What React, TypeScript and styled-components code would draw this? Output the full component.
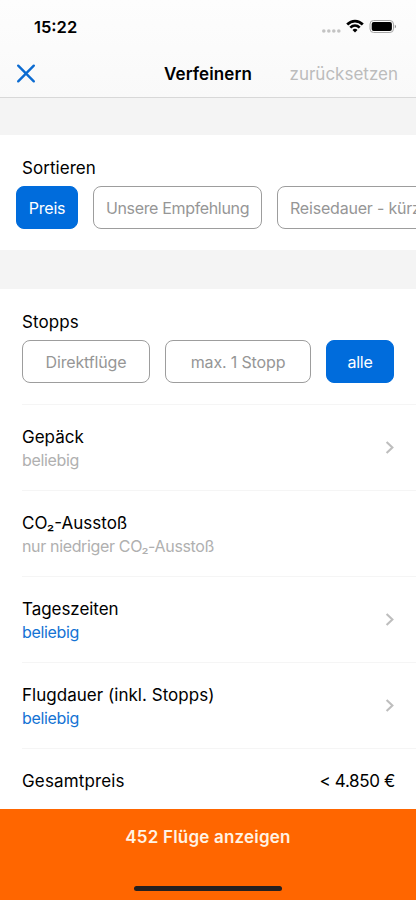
import React from "react";
import styled, { createGlobalStyle } from "styled-components";

const GlobalStyle = createGlobalStyle`
  * { box-sizing: border-box; }
  html, body { margin: 0; padding: 0; }
  body { background: #f4f4f4; font-family: Inter, "Liberation Sans", sans-serif; color: #000; overflow: hidden; }
  button { font: inherit; margin: 0; padding: 0; border: 0; background: none; }
`;

const Screen = styled.main`
  width: 416px;
  height: 900px;
  display: flex;
  flex-direction: column;
  background: #f4f4f4;
  overflow: hidden;
`;

const Header = styled.header`
  flex: none;
  height: 98px;
  border-bottom: 1px solid #d8d8d8;
  background: linear-gradient(#fdfdfd, #f9f9f9);
`;

const StatusBar = styled.div`
  height: 52px;
  padding: 1px 20px 0 34px;
  display: flex;
  align-items: center;
  justify-content: space-between;
`;

const Clock = styled.span`
  font-size: 16.5px;
  font-weight: 600;
  letter-spacing: 0;
`;

const NavBar = styled.div`
  height: 44px;
  padding: 0 18px 0 16px;
  display: grid;
  grid-template-columns: 108px 168px 106px;
  align-items: center;
`;

const CloseButton = styled.button`
  display: flex;
  width: 20px;
  height: 20px;
`;

const Title = styled.h1`
  margin: 0;
  text-align: center;
  white-space: nowrap;
  font-size: 17px;
  font-weight: 600;
  letter-spacing: 0.1px;
`;

const ResetButton = styled.button`
  justify-self: end;
  color: #bcbcbc;
  font-size: 17px;
  letter-spacing: 0;
  white-space: nowrap;
`;

const Section = styled.section<{ $height: number; $gap: number }>`
  flex: none;
  height: ${(p) => p.$height}px;
  margin-top: ${(p) => p.$gap}px;
  background: #fff;
  overflow: hidden;
`;

const SectionTitle = styled.h2<{ $spacing?: number }>`
  margin: 0;
  padding: 22px 22px 0;
  height: 51px;
  font-size: 17px;
  line-height: 23px;
  font-weight: 400;
  letter-spacing: ${(p) => p.$spacing ?? 0.05}px;
`;

const Chips = styled.div<{ $inset: number }>`
  display: flex;
  gap: 15px;
  padding-left: ${(p) => p.$inset}px;
`;

const Chip = styled.button<{ $width: number; $active?: boolean; $start?: boolean; $spacing?: number }>`
  flex: none;
  width: ${(p) => p.$width}px;
  height: 43px;
  border: 1px solid ${(p) => (p.$active ? "#006cdc" : "#9d9d9d")};
  border-radius: 8px;
  padding: 0 0 0 ${(p) => (p.$start ? 12 : 0)}px;
  text-align: ${(p) => (p.$start ? "left" : "center")};
  white-space: nowrap;
  background: ${(p) => (p.$active ? "#006cdc" : "#fff")};
  color: ${(p) => (p.$active ? "#fff" : "#969696")};
  font-size: 16px;
  letter-spacing: ${(p) => p.$spacing ?? -0.15}px;
`;

const Row = styled.div`
  height: 86px;
  margin-left: 22px;
  padding: 1px 21px 0 0;
  border-top: 1px solid #f5f5f5;
  display: flex;
  align-items: center;
  justify-content: space-between;
`;

const RowText = styled.div`
  padding-top: 1px;
`;

const PriceRow = styled(Row)`
  height: 61px;
  padding-top: 4px;
`;

const RowLabel = styled.div<{ $spacing?: number }>`
  font-size: 17px;
  line-height: 23px;
  letter-spacing: ${(p) => p.$spacing ?? -0.05}px;
`;

const RowValue = styled.div<{ $active?: boolean }>`
  font-size: 16px;
  line-height: 22px;
  color: ${(p) => (p.$active ? "#1473d4" : "#b0b0b0")};
  letter-spacing: -0.35px;
`;

const Price = styled.div`
  font-size: 17px;
  letter-spacing: -0.35px;
`;

const Footer = styled.footer`
  flex: none;
  height: 91px;
  background: #ff6600;
  display: flex;
  flex-direction: column;
  align-items: center;
  justify-content: space-between;
  padding: 17px 0 9px;
`;

const ShowButton = styled.button`
  color: #fff3e4;
  font-size: 17px;
  line-height: 23px;
  font-weight: 600;
  letter-spacing: 0.2px;
`;

const HomeIndicator = styled.div`
  width: 148px;
  height: 5px;
  border-radius: 3px;
  background: #242020;
`;

const StatusIcons = () => (
  <svg width="76" height="16" viewBox="0 0 76 16">
    <g fill="#c3c3c3">
      <circle cx="3.8" cy="12" r="1.8" />
      <circle cx="8.8" cy="12" r="1.8" />
      <circle cx="13.8" cy="12" r="1.8" />
      <circle cx="18.8" cy="12" r="1.8" />
    </g>
    <g fill="none" stroke="#000" strokeWidth="2.7">
      <path d="M27.2 5.5C31.7 0.9 38.3 0.9 42.8 5.5" />
      <path d="M30.3 8.6C33.1 5.9 36.9 5.9 39.7 8.6" />
    </g>
    <path d="M32.5 10.9C34 9.4 36 9.4 37.5 10.9L35 13.5Z" fill="#000" />
    <rect x="50" y="1.5" width="23.5" height="12" rx="3.6" fill="none" stroke="#a6a6a6" />
    <rect x="51.7" y="3.1" width="20.2" height="8.8" rx="2" fill="#000" />
    <path d="M74.8 5.8C76.4 6.4 76.4 8.6 74.8 9.2Z" fill="#929292" />
  </svg>
);

const CloseIcon = () => (
  <svg width="20" height="20" viewBox="0 0 20 20">
    <path d="M2.2 1.7L17.8 17.3M17.8 1.7L2.2 17.3" stroke="#0b6bd1" strokeWidth="2.4" strokeLinecap="round" />
  </svg>
);

const Chevron = () => (
  <svg width="10" height="14" viewBox="0 0 10 14">
    <path d="M1.6 0.9L7.4 6.5L1.6 12.1" fill="none" stroke="#bebebe" strokeWidth="2.1" />
  </svg>
);

const filters = [
  { label: "Gepäck", value: "beliebig", active: false, chevron: true, spacing: 0 },
  { label: "CO₂-Ausstoß", value: "nur niedriger CO₂-Ausstoß", active: false, chevron: false, spacing: 0 },
  { label: "Tageszeiten", value: "beliebig", active: true, chevron: true, spacing: -0.05 },
  { label: "Flugdauer (inkl. Stopps)", value: "beliebig", active: true, chevron: true, spacing: 0.03 },
];

const StopChips = styled.div`
  height: 64px;
`;

export default function App() {
  return (
    <>
      <GlobalStyle />
      <Screen>
        <Header>
          <StatusBar>
            <Clock>15:22</Clock>
            <StatusIcons />
          </StatusBar>
          <NavBar>
            <CloseButton aria-label="Schließen"><CloseIcon /></CloseButton>
            <Title>Verfeinern</Title>
            <ResetButton>zurücksetzen</ResetButton>
          </NavBar>
        </Header>
        <Section $height={115} $gap={37}>
          <SectionTitle>Sortieren</SectionTitle>
          <Chips $inset={16}>
            <Chip $width={62} $active $spacing={-0.2}>Preis</Chip>
            <Chip $width={169} $spacing={-0.34}>Unsere Empfehlung</Chip>
            <Chip $width={210} $start $spacing={-0.2}>Reisedauer - kürzeste</Chip>
          </Chips>
        </Section>
        <Section $height={520} $gap={39}>
          <SectionTitle $spacing={0.1}>Stopps</SectionTitle>
          <StopChips>
            <Chips $inset={22}>
              <Chip $width={128}>Direktflüge</Chip>
              <Chip $width={146} $spacing={-0.15}>max. 1 Stopp</Chip>
              <Chip $width={68} $active $spacing={-0.25}>alle</Chip>
            </Chips>
          </StopChips>
          {filters.map((f) => (
            <Row key={f.label}>
              <RowText>
                <RowLabel $spacing={f.spacing}>{f.label}</RowLabel>
                <RowValue $active={f.active}>{f.value}</RowValue>
              </RowText>
              {f.chevron && <Chevron />}
            </Row>
          ))}
          <PriceRow>
            <RowLabel $spacing={0.15}>Gesamtpreis</RowLabel>
            <Price>&lt; 4.850 €</Price>
          </PriceRow>
        </Section>
        <Footer>
          <ShowButton>452 Flüge anzeigen</ShowButton>
          <HomeIndicator />
        </Footer>
      </Screen>
    </>
  );
}
